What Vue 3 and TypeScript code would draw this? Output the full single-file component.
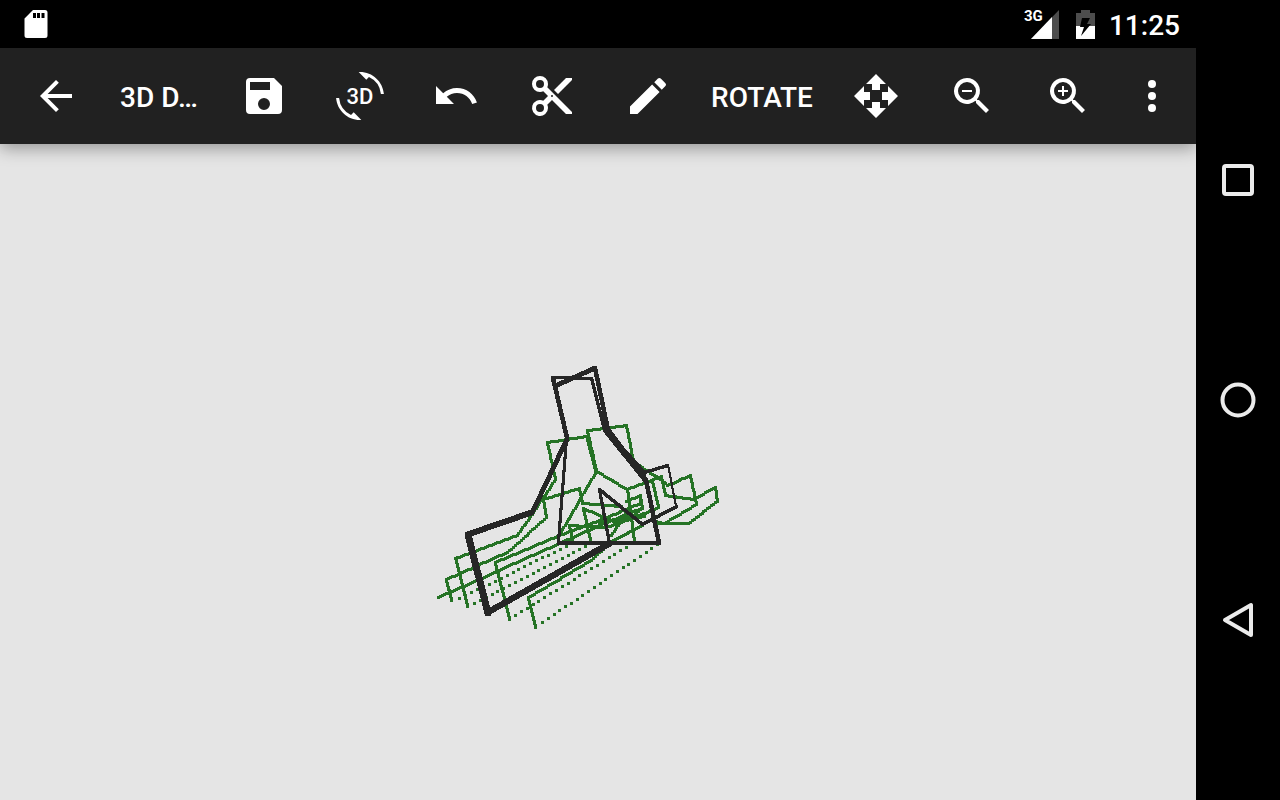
<script setup lang="ts">
import { ref } from 'vue'

type Point = [number, number]

interface Stroke {
  points: Point[]
  brush: number
  step: number
}

const title = ref('3D D…')

const line = (points: Point[], brush = 3, step = 2): Stroke => ({ points, brush, step })

// Stamps a square brush along each segment; a step wider than the brush gives a dotted line.
function stamp({ points, brush, step }: Stroke): string {
  const parts: string[] = []
  const half = Math.ceil(brush / 2)
  for (let i = 1; i < points.length; i++) {
    const [x1, y1] = points[i - 1]
    const [x2, y2] = points[i]
    const count = Math.max(1, Math.ceil(Math.max(Math.abs(x2 - x1), Math.abs(y2 - y1)) / step))
    for (let k = 0; k <= count; k++) {
      const x = Math.round(x1 + ((x2 - x1) * k) / count) - half
      const y = Math.round(y1 + ((y2 - y1) * k) / count) - half
      parts.push(`M${x} ${y}h${brush}v${brush}h${-brush}z`)
    }
  }
  return parts.join('')
}

const greenStrokes: Stroke[] = [
  line([[468, 607], [456, 559], [518, 536], [534, 513], [556, 480], [548, 443], [587, 437], [596, 472]]),
  line([[452, 601], [447, 580], [508, 553], [547, 518], [544, 500], [580, 489], [583, 504], [622, 507]]),
  line([[439, 598], [558, 545], [600, 526], [642, 509]]),
  line([[510, 620], [496, 563], [560, 536], [600, 521], [641, 504]]),
  line([[536, 628], [529, 598], [592, 561], [612, 542], [643, 526]]),
  line([[560, 536], [580, 501], [597, 472], [588, 431], [627, 426], [634, 462], [647, 471], [663, 481], [668, 486], [691, 476], [697, 505], [665, 524], [655, 522]]),
  line([[597, 472], [628, 490], [662, 477]]),
  line([[662, 477], [666, 496], [694, 500], [716, 488], [718, 502], [689, 524], [657, 524]]),
  line([[653, 481], [659, 508], [640, 516], [600, 523]]),
  line([[641, 501], [641, 496], [627, 502]]),
  line([[641, 497], [643, 509], [628, 520]]),
  line([[591, 541], [584, 509], [614, 522], [645, 517]]),
  line([[573, 541], [570, 526], [607, 528], [630, 520]]),
  line([[628, 490], [635, 541]]),
  line([[612, 536], [629, 510]]),
]

const dottedStrokes: Stroke[] = [
  line([[460, 599], [573, 544]], 3, 6),
  line([[475, 604], [592, 544]], 3, 6),
  line([[516, 616], [633, 544]], 3, 6),
  line([[543, 623], [658, 545]], 3, 6),
]

const darkStrokes: Stroke[] = [
  line([[567, 439], [532, 513]], 4, 1),
  line([[532, 513], [468, 535]], 5, 1),
  line([[468, 535], [488, 613]], 6, 1),
  line([[488, 613], [610, 544]], 5, 1),
  line([[567, 438], [553, 378]], 4, 1),
  line([[553, 378], [592, 379], [605, 431], [646, 482]], 3, 1),
  line([[646, 480], [659, 543]], 4, 1),
  line([[555, 386], [595, 368]], 4, 1),
  line([[595, 368], [608, 430]], 4, 1),
  line([[608, 430], [646, 480]], 4, 1),
  line([[625, 452], [644, 473]], 4, 1),
  line([[567, 439], [559, 542]], 3, 1),
  line([[559, 543], [659, 543]], 4, 1),
  line([[645, 473], [668, 466]], 3, 1),
  line([[668, 465], [676, 506]], 2, 1),
  line([[677, 507], [643, 525], [600, 490], [610, 544]], 3, 1),
]

const layers = [
  { name: 'green', strokes: [...greenStrokes, ...dottedStrokes].map(stamp) },
  { name: 'dark', strokes: darkStrokes.map(stamp) },
]
</script>

<template>
  <div class="device">
    <div class="screen">
      <div class="status">
        <svg class="sd" viewBox="0 0 24 28" role="img" aria-label="SD card">
          <path fill="#fff" fill-rule="evenodd" d="M9 0H21Q23.500 0 23.500 2.500V25.500Q23.500 28 21 28H3Q.5 28 .5 25.500V8.500ZM9 3V8H12V3ZM13 3V8H16V3ZM17.500 3V8H20.500V3Z" />
        </svg>
        <div class="indicators">
          <span class="network">3G</span>
          <svg class="signal" viewBox="0 0 28 29" aria-hidden="true">
            <path fill="#4d4d4d" d="M28 0V29H0Z" />
            <path fill="#fff" d="M21 7V29H0Z" />
          </svg>
          <svg class="battery" viewBox="0 0 19 29" role="img" aria-label="Charging">
            <path fill="#4d4d4d" d="M5 0H14V3H19V16H0V3H5Z" />
            <path fill="#fff" d="M0 16H19V29H0Z" />
            <path fill="#000" d="M6 8H14L11 14H15L5 26L8 17H4Z" />
          </svg>
          <time class="clock">11:25</time>
        </div>
      </div>

      <header class="toolbar">
        <button class="tool" type="button" aria-label="Back">
          <svg viewBox="0 0 24 24"><path d="M20 11H7.830l5.590-5.590L12 4l-8 8 8 8 1.410-1.410L7.830 13H20z" /></svg>
        </button>
        <h1 class="title">{{ title }}</h1>
        <button class="tool" type="button" aria-label="Save">
          <svg viewBox="0 0 24 24"><path d="M17 3H5a2 2 0 0 0-2 2v14a2 2 0 0 0 2 2h14a2 2 0 0 0 2-2V7zm-5 16a3 3 0 1 1 0-6 3 3 0 0 1 0 6zm3-10H5V5h10z" /></svg>
        </button>
        <button class="tool" type="button" aria-label="Rotate in 3D">
          <svg viewBox="0 0 24 24">
            <path d="M7.520 21.480A10.490 10.490 0 0 1 1.550 13H.05C.56 19.160 5.710 24 12 24l.66-.03-3.810-3.810zM12 0l-.66.03 3.810 3.810 1.330-1.320A10.490 10.490 0 0 1 22.450 11h1.500C23.440 4.840 18.290 0 12 0z" />
            <text x="12" y="16" text-anchor="middle">3D</text>
          </svg>
        </button>
        <button class="tool" type="button" aria-label="Undo">
          <svg viewBox="0 0 24 24"><path d="M12.500 8c-2.650 0-5.050.99-6.900 2.600L2 7v9h9l-3.620-3.620c1.390-1.160 3.160-1.880 5.120-1.880 3.540 0 6.550 2.310 7.600 5.500l2.370-.78C21.080 11.030 17.150 8 12.500 8z" /></svg>
        </button>
        <button class="tool" type="button" aria-label="Cut">
          <svg viewBox="0 0 24 24"><path d="M9.640 7.640c.23-.5.360-1.050.360-1.640a4 4 0 1 0-4 4c.59 0 1.140-.13 1.640-.36L10 12l-2.360 2.360A4 4 0 1 0 10 18c0-.59-.13-1.140-.36-1.640L12 14l7 7h3v-1zM6 8a2 2 0 1 1 0-4 2 2 0 0 1 0 4zm0 12a2 2 0 1 1 0-4 2 2 0 0 1 0 4zm6-7.500a.5.500 0 1 1 0-1 .5.500 0 0 1 0 1zM19 3l-6 6 2 2 7-7V3z" /></svg>
        </button>
        <button class="tool" type="button" aria-label="Draw">
          <svg viewBox="0 0 24 24"><path d="M3 17.250V21h3.750L17.810 9.940l-3.750-3.750zM20.710 7.040a1 1 0 0 0 0-1.410l-2.340-2.340a1 1 0 0 0-1.410 0l-1.830 1.830 3.750 3.750z" /></svg>
        </button>
        <button class="mode" type="button">ROTATE</button>
        <button class="tool" type="button" aria-label="Move">
          <svg viewBox="0 0 24 24"><path d="M10 9h4V6h3l-5-5-5 5h3zM9 10H6V7l-5 5 5 5v-3h3zM23 12l-5-5v3h-3v4h3v3zM14 15h-4v3H7l5 5 5-5h-3z" /></svg>
        </button>
        <button class="tool" type="button" aria-label="Zoom out">
          <svg viewBox="0 0 24 24"><path d="M15.500 14h-.79l-.28-.27A6.500 6.500 0 1 0 13.730 14.430l.27.28v.79l5 4.990L20.490 19zm-6 0a4.500 4.500 0 1 1 0-9 4.500 4.500 0 0 1 0 9zM7 9h5v1H7z" /></svg>
        </button>
        <button class="tool" type="button" aria-label="Zoom in">
          <svg viewBox="0 0 24 24"><path d="M15.500 14h-.79l-.28-.27A6.500 6.500 0 1 0 13.730 14.430l.27.28v.79l5 4.990L20.490 19zm-6 0a4.500 4.500 0 1 1 0-9 4.500 4.500 0 0 1 0 9zM12 10h-2v2H9v-2H7V9h2V7h1v2h2z" /></svg>
        </button>
        <button class="tool more" type="button" aria-label="More options">
          <svg viewBox="0 0 24 24"><circle cx="12" cy="6" r="2" /><circle cx="12" cy="12" r="2" /><circle cx="12" cy="18" r="2" /></svg>
        </button>
      </header>

      <main class="canvas">
        <svg class="drawing" viewBox="430 360 296 276" role="img" aria-label="3D line drawing">
          <g v-for="layer in layers" :key="layer.name" :class="layer.name">
            <path v-for="(d, i) in layer.strokes" :key="i" :d="d" />
          </g>
        </svg>
      </main>
    </div>

    <nav class="system" aria-label="System navigation">
      <button type="button" aria-label="Recent apps">
        <svg viewBox="0 0 40 40"><rect x="6" y="6" width="28" height="28" rx="2" /></svg>
      </button>
      <button type="button" aria-label="Home">
        <svg viewBox="0 0 40 40"><circle cx="20" cy="20" r="15.500" /></svg>
      </button>
      <button type="button" aria-label="Back">
        <svg viewBox="0 0 40 40"><path d="M33 5V35L7 20Z" /></svg>
      </button>
    </nav>
  </div>
</template>

<style>
body {
  margin: 0;
}
</style>

<style scoped>
.device {
  display: flex;
  height: 100vh;
  background: #000;
  color: #fff;
  font-family: Roboto, "Liberation Sans", sans-serif;
}

.screen {
  flex: 1;
  min-width: 0;
  display: flex;
  flex-direction: column;
  overflow: hidden;
}

button {
  padding: 0;
  border: 0;
  background: none;
  color: inherit;
  font: inherit;
}

svg {
  display: block;
}

.status {
  height: 48px;
  display: flex;
  align-items: center;
  justify-content: space-between;
  padding: 0 16px 0 24px;
}

.sd {
  width: 24px;
  height: 28px;
}

.indicators {
  display: flex;
  align-items: center;
}

.network {
  align-self: flex-start;
  width: 7px;
  padding-top: 2px;
  font-size: 15px;
  line-height: 16px;
  font-weight: 700;
}

.signal {
  width: 28px;
  height: 29px;
  margin-right: 17px;
}

.battery {
  width: 19px;
  height: 29px;
  margin-right: 14px;
}

.clock {
  padding-top: 4px;
  font-size: 28px;
  line-height: 32px;
  font-weight: 500;
}

.toolbar {
  position: relative;
  height: 96px;
  display: flex;
  align-items: center;
  padding-left: 8px;
  background: #212121;
  box-shadow: 0 4px 16px rgba(0, 0, 0, 0.36);
}

.tool {
  flex: none;
  width: 96px;
  height: 96px;
  display: grid;
  place-items: center;
}

.tool svg {
  width: 48px;
  height: 48px;
  fill: #fff;
}

.tool text {
  font-size: 11px;
  font-weight: 500;
}

.title,
.mode {
  padding-top: 4px;
  font-size: 28px;
  line-height: 36px;
  font-weight: 500;
}

.title {
  flex: 1;
  min-width: 0;
  margin: 0 0 0 16px;
  overflow: hidden;
  text-overflow: ellipsis;
  white-space: nowrap;
}

.mode {
  flex: none;
  width: 132px;
}

.more {
  width: 80px;
  padding-right: 8px;
}

.canvas {
  flex: 1;
  min-height: 0;
  display: grid;
  place-items: center;
  padding: 52px 40px 0 0;
  background: #e5e5e5;
}

.drawing {
  width: 296px;
  height: 276px;
  shape-rendering: crispEdges;
}

.green {
  fill: #257325;
}

.dark {
  fill: #262626;
}

.system {
  width: 84px;
  display: flex;
  flex-direction: column;
  align-items: center;
  justify-content: center;
  gap: 20px;
}

.system button {
  width: 84px;
  height: 200px;
  display: grid;
  place-items: center;
}

.system svg {
  width: 40px;
  height: 40px;
  fill: none;
  stroke: #ebebeb;
  stroke-width: 4;
  stroke-linejoin: round;
}
</style>
